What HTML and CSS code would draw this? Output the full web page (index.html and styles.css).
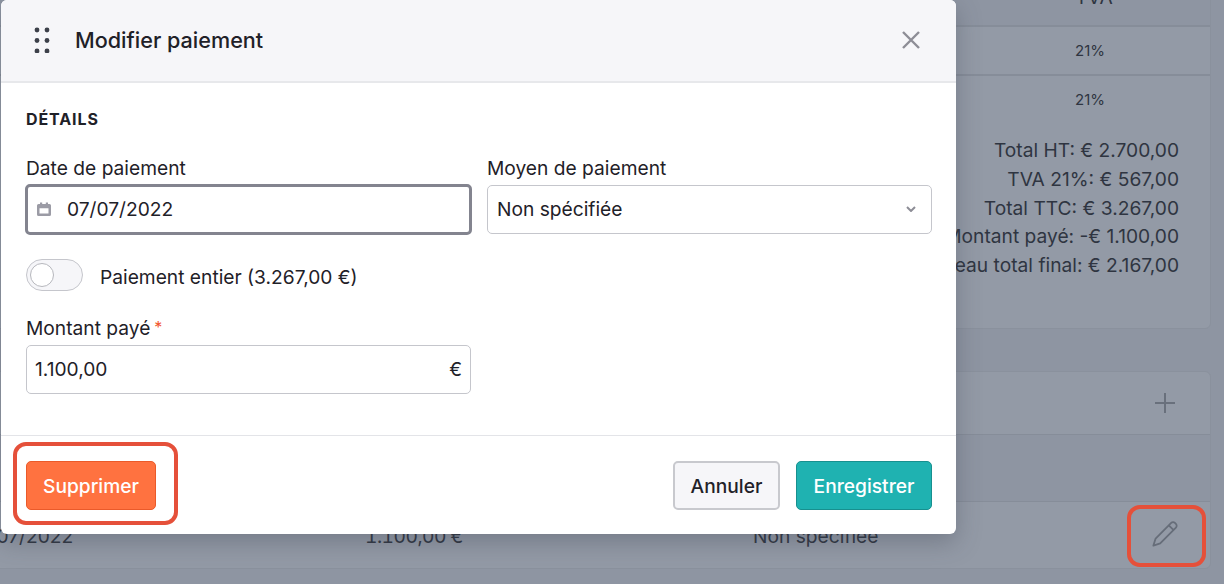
FILE: index.html
```html
<!DOCTYPE html>
<html lang="fr">
<head>
  <meta charset="UTF-8" />
  <title>Modifier paiement</title>
  <link rel="stylesheet" href="styles.css">
</head>
<body>
  <div class="page">
    <section class="card card-invoice">
      <div class="invoice-row invoice-head"><span>TVA</span></div>
      <div class="invoice-row invoice-line"><span>21%</span></div>
      <div class="invoice-row invoice-line invoice-line-thick"><span>21%</span></div>
      <div class="totals">
        <p>Total HT: € 2.700,00</p>
        <p>TVA 21%: € 567,00</p>
        <p>Total TTC: € 3.267,00</p>
        <p>Montant payé: -€ 1.100,00</p>
        <p>Nouveau total final: € 2.167,00</p>
      </div>
    </section>

    <section class="card card-payments">
      <div class="payments-head">
        <svg class="icon-plus" width="20" height="20" viewBox="0 0 20 20"><path d="M10 0.5v19M0.5 10h19"/></svg>
      </div>
      <div class="payments-columns"></div>
      <div class="payments-row">
        <span>07/07/2022</span>
        <span class="amount">1.100,00 €</span>
        <span>Non spécifiée</span>
        <svg class="icon-pencil" width="26" height="26" viewBox="0 0 26 26"><path d="M19.2 1.9a2.6 2.6 0 0 1 3.7 0l1 1a2.6 2.6 0 0 1 0 3.7L8.2 22.3 1.4 24.6l2.2-7z"/><path d="M16.8 4.3l4.9 4.9"/></svg>
      </div>
    </section>
  </div>

  <div class="modal">
    <header class="modal-head">
      <svg class="icon-drag" width="16" height="26" viewBox="0 0 16 26"><circle cx="3" cy="3" r="2.4"/><circle cx="13" cy="3" r="2.4"/><circle cx="3" cy="13.5" r="2.4"/><circle cx="13" cy="13.5" r="2.4"/><circle cx="3" cy="24" r="2.4"/><circle cx="13" cy="24" r="2.4"/></svg>
      <h2>Modifier paiement</h2>
      <svg class="icon-close" width="20" height="20" viewBox="0 0 20 20"><path d="M2 2l16 16M18 2L2 18"/></svg>
    </header>

    <div class="modal-body">
      <h3>DÉTAILS</h3>
      <div class="form-grid">
        <div class="field">
          <label>Date de paiement</label>
          <div class="input input-focus">
            <svg class="icon-cal" width="14" height="14" viewBox="0 0 14 14"><path d="M3 0.5h2.200v1.500h3.600V0.5H11V2h1.500A1.500 1.500 0 0 1 14 3.500v9a1.500 1.500 0 0 1-1.500 1.500h-11A1.500 1.500 0 0 1 0 12.500v-9A1.500 1.500 0 0 1 1.500 2H3zM2.500 6.200v5.300h9V6.200z"/></svg>
            <span>07/07/2022</span>
          </div>
        </div>
        <div class="field">
          <label>Moyen de paiement</label>
          <div class="input input-select">
            <span>Non spécifiée</span>
            <svg class="icon-chevron" width="10" height="6" viewBox="0 0 10 6"><path d="M1 1l4 4 4-4"/></svg>
          </div>
        </div>
      </div>

      <div class="toggle-row">
        <span class="toggle"><span class="toggle-knob"></span></span>
        <span class="toggle-label">Paiement entier (3.267,00 €)</span>
      </div>

      <div class="form-grid">
        <div class="field field-amount">
          <label>Montant payé<span class="required">*</span></label>
          <div class="input input-amount">
            <span>1.100,00</span>
            <span>€</span>
          </div>
        </div>
      </div>
    </div>

    <footer class="modal-foot">
      <button class="btn btn-danger">Supprimer</button>
      <div class="foot-right">
        <button class="btn btn-light">Annuler</button>
        <button class="btn btn-primary">Enregistrer</button>
      </div>
    </footer>
  </div>

  <div class="mark mark-delete"></div>
  <div class="mark mark-edit"></div>
</body>
</html>
```

FILE: styles.css
```css
* {
  box-sizing: border-box;
}
body {
  margin: 0;
  height: 584px;
  overflow: hidden;
  position: relative;
  background-color: #8e95a2;
  font-family: Inter, "Liberation Sans", sans-serif;
  font-size: 19.2px;
  color: #1f2128;
}
.page {
  width: 1259px;
  margin: -21px 0 0 -48px;
  display: flex;
  flex-direction: column;
  gap: 42px;
  color: #2f3541;
}
.card {
  background: #939aa6;
  border: 1px solid #8a919d;
  border-radius: 6px;
}
.card-invoice {
  height: 350px;
}
.invoice-row {
  display: flex;
  justify-content: flex-end;
  align-items: center;
}
.invoice-row span {
  width: 232px;
  text-align: center;
}
.invoice-head {
  height: 47px;
  padding-bottom: 12px;
  background: #8e95a2;
  border-bottom: 2px solid #868d99;
}
.invoice-line {
  height: 47px;
  font-size: 15px;
}
.invoice-line span {
  width: 240px;
}
.invoice-line-thick {
  height: 49px;
  border-top: 2px solid #868d99;
}
.totals {
  padding: 13px 31px 0 0;
  text-align: right;
  line-height: 28.8px;
}
.totals p {
  margin: 0;
}
.card-payments {
  height: 198px;
}
.payments-head {
  height: 63px;
  display: flex;
  justify-content: flex-end;
  align-items: center;
  padding-right: 35px;
  border-bottom: 1px solid #868d99;
}
.payments-columns {
  height: 67px;
  background: #8e95a2;
  border-bottom: 1px solid #868d99;
}
.payments-row {
  height: 66px;
  display: grid;
  grid-template-columns: 398px 388px 1fr 26px;
  align-items: center;
  padding: 0 32px 0 14px;
}
.payments-row span {
  padding-top: 2px;
}
.amount {
  font-variant-numeric: tabular-nums;
  letter-spacing: -0.5px;
}
.icon-plus path {
  fill: none;
  stroke: #69707c;
  stroke-width: 2;
  stroke-linecap: round;
}
.icon-pencil {
  margin-top: -3px;
}
.icon-pencil path {
  fill: none;
  stroke: #666d79;
  stroke-width: 1.8;
  stroke-linejoin: round;
}

.modal {
  position: absolute;
  left: 1px;
  top: 0;
  width: 955px;
  height: 534px;
  display: flex;
  flex-direction: column;
  background: #fff;
  border-radius: 6px;
  box-shadow: 0 8px 24px rgba(60, 66, 80, 0.35);
}
.modal-head {
  height: 83px;
  flex: none;
  display: flex;
  align-items: center;
  padding: 0 35px 1px 33px;
  background: #f6f6f9;
  border-bottom: 2px solid #e7e8eb;
  border-radius: 6px 6px 0 0;
}
.modal-head h2 {
  flex: 1;
  margin: 0 0 0 25px;
  font-size: 21.6px;
  font-weight: 500;
  color: #1f2128;
}
.icon-drag {
  fill: #3c404a;
}
.icon-close path {
  fill: none;
  stroke: #8d8d96;
  stroke-width: 2.4;
}
.modal-body {
  flex: 1;
  padding: 27px 24px 0 25px;
}
.modal-body h3 {
  margin: 0 0 29px;
  font-size: 16px;
  line-height: 18px;
  font-weight: 700;
  letter-spacing: 0.9px;
}
.form-grid {
  display: grid;
  grid-template-columns: 1fr 1fr;
  gap: 16px;
}
.field label {
  display: block;
  height: 28px;
  line-height: 22px;
}
.field-amount label {
  height: 29px;
}
.required {
  color: #f2552c;
  font-size: 16px;
  margin-left: 4px;
  vertical-align: 2px;
}
.input {
  height: 49px;
  display: flex;
  align-items: center;
  background: #fff;
  border: 1px solid #c5c6cc;
  border-radius: 5px;
  padding: 0 8px 1px;
}
.input-focus {
  height: 51px;
  margin: -1px -1px -1px -1px;
  border: 3px solid #83848f;
  padding-left: 9px;
  gap: 16px;
}
.icon-cal {
  fill: #9b9ba5;
}
.input-select {
  justify-content: space-between;
  padding: 0 15px 1px 9px;
}
.icon-chevron path {
  fill: none;
  stroke: #8d8d96;
  stroke-width: 2;
}
.input-amount {
  justify-content: space-between;
}
.toggle-row {
  display: flex;
  align-items: center;
  gap: 17px;
  margin: 25px 0 25px;
  height: 32px;
}
.toggle-label {
  padding-top: 3px;
}
.toggle {
  width: 57px;
  height: 32px;
  padding: 3px;
  background: #f6f6f9;
  border: 1px solid #c5c6cc;
  border-radius: 16px;
}
.toggle-knob {
  display: block;
  width: 24px;
  height: 24px;
  background: #fff;
  border: 1px solid #b6b7bd;
  border-radius: 50%;
}
.modal-foot {
  height: 99px;
  flex: none;
  display: flex;
  justify-content: space-between;
  padding: 25px 24px 0 25px;
  border-top: 1px solid #e3e4e8;
}
.foot-right {
  display: flex;
  gap: 16px;
}
.btn {
  height: 49px;
  padding: 0;
  border-radius: 5px;
  font-family: inherit;
  font-size: 19.2px;
  font-weight: 500;
}
.btn-danger {
  width: 130px;
  background: #ff7240;
  border: 1px solid #ea5a2a;
  color: #fff;
}
.btn-light {
  width: 107px;
  background: #f6f6f9;
  border: 2px solid #c8c9ce;
  color: #1f2128;
}
.btn-primary {
  width: 136px;
  background: #1fb2b1;
  border: 1px solid #17908f;
  color: #fff;
}

.mark {
  position: absolute;
  border: 4px solid #e5503a;
  border-radius: 13px;
}
.mark-delete {
  left: 13px;
  top: 442px;
  width: 165px;
  height: 83px;
}
.mark-edit {
  left: 1127px;
  top: 505px;
  width: 79px;
  height: 62px;
}
```
